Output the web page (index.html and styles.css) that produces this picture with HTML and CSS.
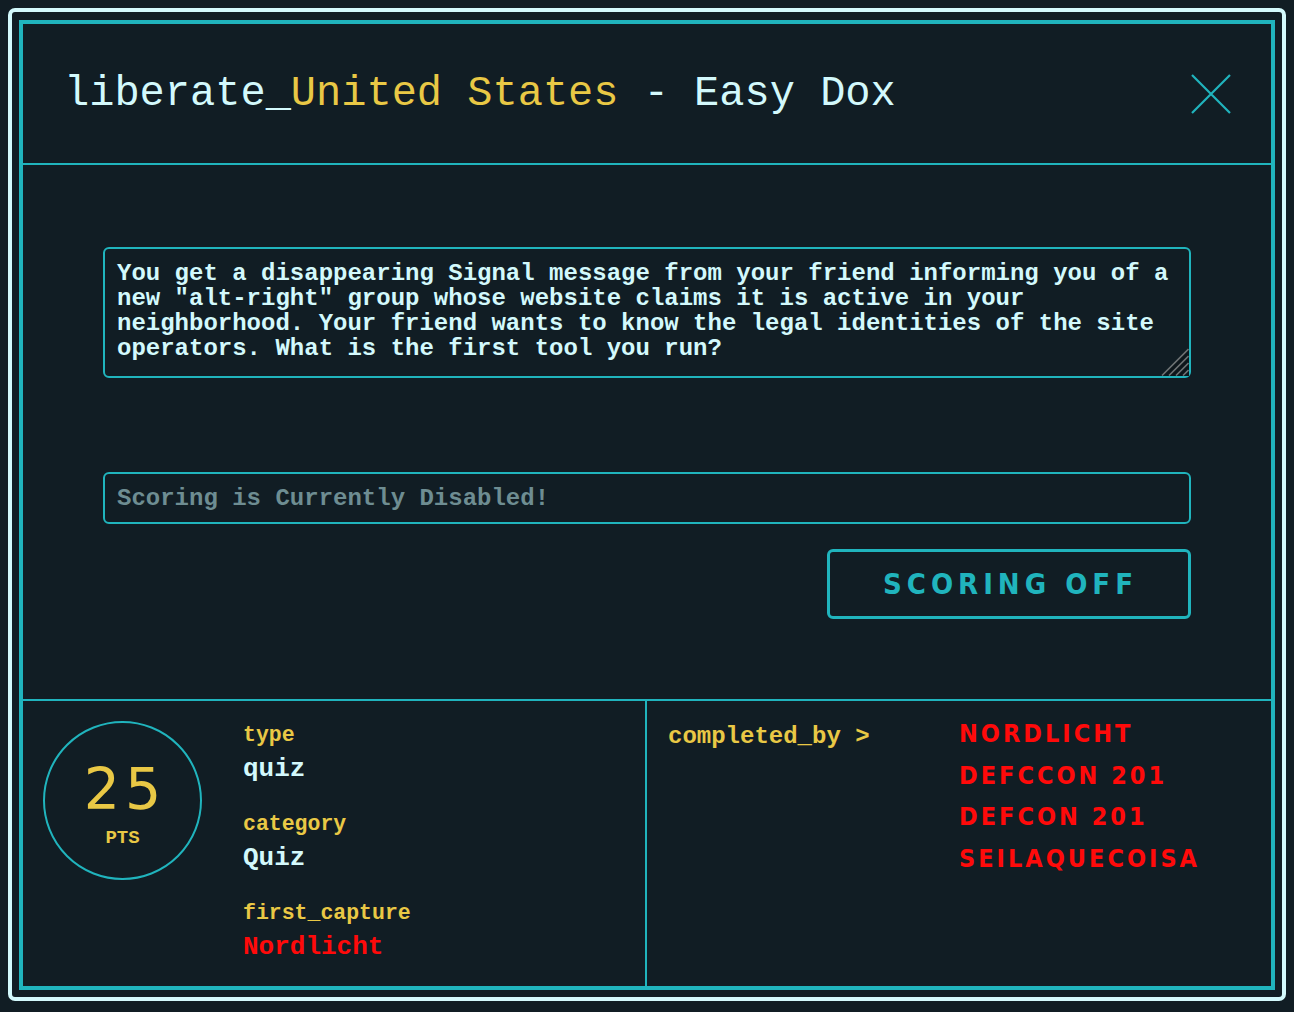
FILE: index.html
```html
<!DOCTYPE html>
<html>
<head>
<meta charset="utf-8">
<link rel="stylesheet" href="styles.css">
</head>
<body>
<div class="frame">
  <div class="modal">
    <header class="head">
      <h1 class="title">liberate_<span class="hl">United States</span> - Easy Dox</h1>
      <button class="close" aria-label="close">
        <svg width="40" height="40" viewBox="0 0 40 40"><path d="M1 1 L39 39 M39 1 L1 39" stroke="#20b4bd" stroke-width="2.2" fill="none"/></svg>
      </button>
    </header>
    <section class="main">
      <div class="question-wrap">
        <textarea class="question" readonly>You get a disappearing Signal message from your friend informing you of a new "alt-right" group whose website claims it is active in your neighborhood. Your friend wants to know the legal identities of the site operators. What is the first tool you run?</textarea>
        <svg class="grip" width="28" height="28" viewBox="0 0 28 28">
          <path d="M28 0 L28 28 L0 28 Z" fill="#0d161b"/>
          <path d="M1 27.5 L27.5 1 M8 27.5 L27.5 8 M15 27.5 L27.5 15 M22 27.5 L27.5 22" stroke="#6d7274" stroke-width="1.6"/>
        </svg>
      </div>
      <input class="answer" type="text" placeholder="Scoring is Currently Disabled!" disabled>
      <div class="actions"><button class="submit">SCORING OFF</button></div>
    </section>
    <footer class="foot">
      <div class="meta">
        <div class="points"><span class="num">25</span><span class="pts">PTS</span></div>
        <dl class="info">
          <dt>type</dt><dd>quiz</dd>
          <dt>category</dt><dd>Quiz</dd>
          <dt>first_capture</dt><dd class="red">Nordlicht</dd>
        </dl>
      </div>
      <div class="solves">
        <div class="solves-label">completed_by &gt;</div>
        <ul class="names">
          <li>NORDLICHT</li>
          <li>DEFCCON 201</li>
          <li>DEFCON 201</li>
          <li>SEILAQUECOISA</li>
        </ul>
      </div>
    </footer>
  </div>
</div>
</body>
</html>
```

FILE: styles.css
```css
html, body {
  margin: 0;
  background: #111d24;
}
body {
  padding: 8px;
  font-family: "Liberation Mono", "Courier New", monospace;
}
.frame {
  border: 4px solid #d3f9fc;
  border-radius: 7px;
  padding: 8px 7px 7px 7px;
  height: 993px;
  box-sizing: border-box;
}
.modal {
  border: 4px solid #20b4bd;
  height: 970px;
  box-sizing: border-box;
  display: flex;
  flex-direction: column;
}
.head {
  height: 139px;
  border-bottom: 2px solid #20b4bd;
  display: flex;
  align-items: center;
  justify-content: space-between;
  padding: 0 40px 0 41px;
  flex: none;
}
.title {
  margin: 0;
  font-weight: normal;
  font-size: 42px;
  color: #d3f9fc;
  white-space: nowrap;
}
.hl { color: #e9c845; }
.close {
  background: none;
  border: 0;
  padding: 0;
  width: 40px;
  height: 40px;
  display: block;
}
.close svg { display: block; }
.main {
  height: 536px;
  box-sizing: border-box;
  padding: 82px 80px 0 80px;
  border-bottom: 2px solid #20b4bd;
  display: flex;
  flex-direction: column;
  flex: none;
}
.question-wrap {
  position: relative;
  margin: 0 0 94px 0;
}
.question {
  display: block;
  height: 131px;
  box-sizing: border-box;
  width: 100%;
  margin: 0;
  border: 2px solid #20b4bd;
  border-radius: 6px;
  background: transparent;
  color: #d3f9fc;
  font-family: "Liberation Mono", "Courier New", monospace;
  font-weight: bold;
  font-size: 24px;
  line-height: 25px;
  padding: 12px 12px;
  outline: none;
  overflow: hidden;
  resize: none;
}
.grip {
  position: absolute;
  right: 2px;
  bottom: 2px;
  display: block;
}
.answer {
  display: block;
  height: 52px;
  box-sizing: border-box;
  width: 100%;
  margin: 0 0 25px 0;
  border: 2px solid #20b4bd;
  border-radius: 6px;
  background: transparent;
  font-family: "Liberation Mono", "Courier New", monospace;
  font-weight: bold;
  font-size: 24px;
  padding: 0 12px;
}
.answer::placeholder { color: #6e8d92; opacity: 1; }
.actions {
  display: flex;
  justify-content: flex-end;
}
.submit {
  width: 364px;
  height: 70px;
  box-sizing: border-box;
  border: 3px solid #20b4bd;
  border-radius: 6px;
  background: transparent;
  color: #20b4bd;
  font-family: "DejaVu Sans Condensed", "DejaVu Sans", sans-serif;
  font-stretch: condensed;
  font-weight: bold;
  font-size: 29px;
  letter-spacing: 5px;
  padding: 0 0 0 3px;
}
.foot {
  flex: 1;
  display: grid;
  grid-template-columns: 1fr 1fr;
}
.meta {
  border-right: 2px solid #20b4bd;
  padding: 20px;
  display: flex;
  align-items: flex-start;
}
.points {
  width: 159px;
  height: 159px;
  box-sizing: border-box;
  border: 2px solid #20b4bd;
  border-radius: 50%;
  display: flex;
  flex-direction: column;
  align-items: center;
  justify-content: center;
  padding-top: 7px;
  flex: none;
}
.num {
  font-family: "DejaVu Sans", sans-serif;
  font-size: 57px;
  line-height: 57px;
  color: #e9c845;
  letter-spacing: 5px;
  margin-right: -5px;
}
.pts {
  margin-top: 11px;
  font-weight: bold;
  font-size: 19px;
  line-height: 19px;
  color: #e9c845;
}
.info {
  margin: 0 0 0 41px;
  padding-top: 2px;
}
.info dt {
  font-weight: bold;
  font-size: 21.5px;
  line-height: 24px;
  color: #e9c845;
  margin: 0 0 7px 0;
}
.info dd {
  margin: 0 0 28px 0;
  font-weight: bold;
  font-size: 26px;
  line-height: 30px;
  color: #d3f9fc;
}
.info dd.red { color: #ff0a0a; margin-bottom: 0; }
.solves {
  display: flex;
  align-items: flex-start;
  padding: 0 0 0 21px;
}
.solves-label {
  width: 291px;
  flex: none;
  margin-top: 22px;
  font-weight: bold;
  font-size: 24px;
  line-height: 28px;
  color: #e9c845;
}
.names {
  list-style: none;
  margin: 12px 0 0 0;
  padding: 0;
}
.names li {
  font-family: "DejaVu Sans Condensed", "DejaVu Sans", sans-serif;
  font-stretch: condensed;
  font-weight: bold;
  font-size: 25px;
  line-height: 41.7px;
  letter-spacing: 3px;
  color: #ff0a0a;
}
```
